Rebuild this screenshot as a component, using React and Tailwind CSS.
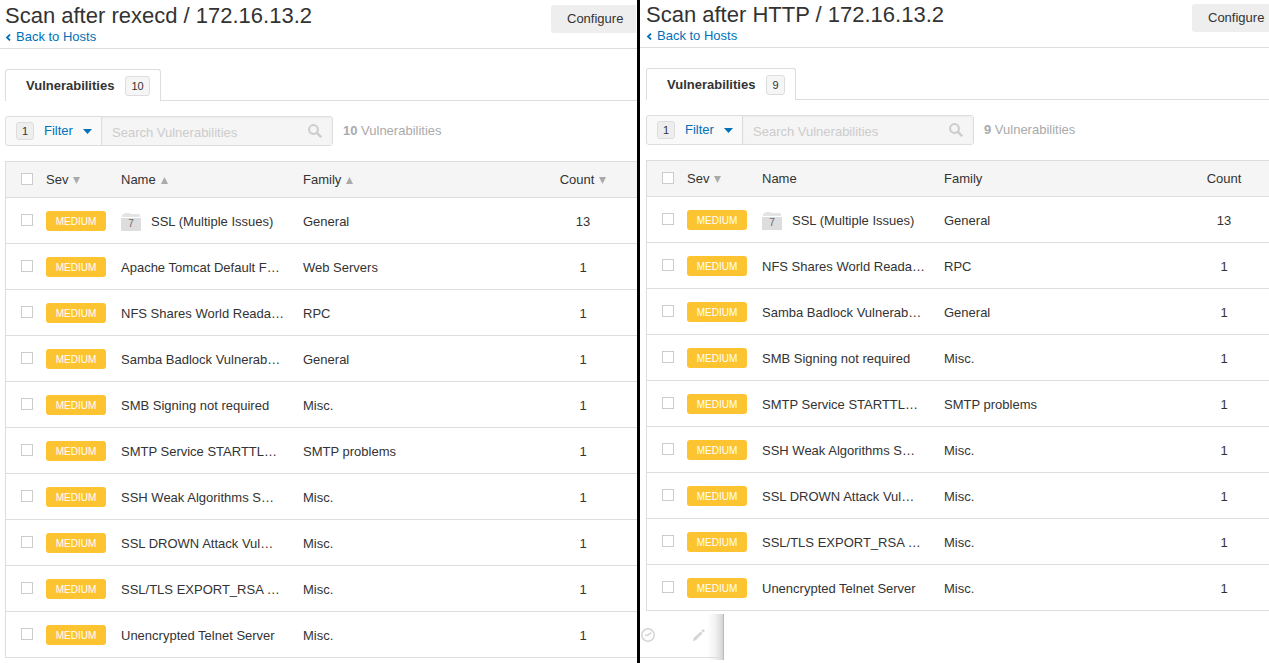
import React from "react";
import clsx from "clsx";

const sharedRows = [
  ["NFS Shares World Reada…", "RPC", 1],
  ["Samba Badlock Vulnerab…", "General", 1],
  ["SMB Signing not required", "Misc.", 1],
  ["SMTP Service STARTTL…", "SMTP problems", 1],
  ["SSH Weak Algorithms S…", "Misc.", 1],
  ["SSL DROWN Attack Vul…", "Misc.", 1],
  ["SSL/TLS EXPORT_RSA …", "Misc.", 1],
  ["Unencrypted Telnet Server", "Misc.", 1],
];
const sslGroup = ["SSL (Multiple Issues)", "General", 13, 7];
const rexecdRows = [sslGroup, ["Apache Tomcat Default F…", "Web Servers", 1], ...sharedRows];
const httpRows = [sslGroup, ...sharedRows];

function Sort({ down }) {
  return (
    <svg className="ml-[5px] inline-block h-[7px] w-[7px] fill-[#aaa]" viewBox="0 0 7 7" aria-hidden="true">
      <path d={down ? "M0 0h7L3.5 7z" : "M0 7h7L3.5 0z"} />
    </svg>
  );
}

function Check({ label }) {
  return (
    <input
      type="checkbox"
      aria-label={label}
      className="block h-3 w-3 appearance-none border border-[#ccc] bg-white checked:bg-[#0071b9]"
    />
  );
}

function Folder({ count }) {
  return (
    <span className="relative mr-2.5 inline-block h-[18px] w-5 shrink-0">
      <svg className="block h-[18px] w-5" viewBox="0 0 20 18" aria-hidden="true">
        <path d="M1 4V2l1-1h1l1-1h4.500l1 1H18l1 1v2z" fill="#e4e4e4" />
        <path d="M0 5h20v12l-.5 1H.5L0 17z" fill="#ddd" />
      </svg>
      <span className="absolute inset-x-0 top-1 text-center text-[10px] leading-[14px] text-[#666]">{count}</span>
    </span>
  );
}

function Panel({ title, rows, sortable, id, className, inset, countWidth, buttonClass, children }) {
  return (
    <section className={clsx("min-w-0", className)}>
      <header className={clsx("flex items-start justify-between border-b border-[#ddd] pb-0.5", inset)}>
        <div>
          <h1 className="text-[22px] leading-6">{title}</h1>
          <a href="#hosts" className="flex items-center text-[13px] leading-[18px] text-[#0071b9]">
            <svg className="mr-1 h-[7px] w-[7px]" viewBox="0 0 7 7" fill="none" stroke="currentColor" strokeWidth="1.800" aria-hidden="true">
              <path d="M5 .6 2 3.500 5 6.400" />
            </svg>
            Back to Hosts
          </a>
        </div>
        <button type="button" className={clsx("mt-px h-7 rounded-l-[3px] bg-[#eee] pl-4 text-left", buttonClass)}>
          Configure
        </button>
      </header>

      <div className={clsx("mt-5", inset, "pt-0!")}>
        <nav className="flex items-end">
          <a href="#vulnerabilities" className="flex h-8 items-center gap-[11px] rounded-t-[3px] border border-b-0 border-[#ddd] pl-5 pr-2.5 font-bold">
            Vulnerabilities
            <span className="rounded-[3px] border border-[#ddd] bg-[#f5f5f5] px-[5px] text-[11px] leading-[18px] font-normal">{rows.length}</span>
          </a>
          <div className="flex-1 border-b border-[#ddd]" />
        </nav>

        <div className="mt-[15px] flex items-center">
          <div className="flex h-[30px] w-[328px] rounded-[3px] border border-[#ddd] bg-[#f9f9f9]">
            <button type="button" className="flex w-24 shrink-0 items-center border-r border-[#ddd] pl-2.5 text-[#0071b9]">
              <span className="mr-2.5 w-[18px] rounded-[3px] border border-[#ddd] bg-[#eee] text-center text-[11px] leading-4 text-[#333]">1</span>
              Filter
              <svg className="ml-2.5 h-[5px] w-[9px] fill-current" viewBox="0 0 9 5" aria-hidden="true">
                <path d="M0 0h9L4.500 5z" />
              </svg>
            </button>
            <div className="flex min-w-0 flex-1 items-center bg-[#f5f5f5] pr-2.5 shadow-[inset_0_1px_2px_#ececec]">
              <label htmlFor={id} className="sr-only">Search Vulnerabilities</label>
              <input id={id} type="text" placeholder="Search Vulnerabilities" className="h-full min-w-0 flex-1 bg-transparent pt-0.5 pl-2.5 outline-none placeholder:text-[#ccc]" />
              <svg className="h-3.5 w-3.5" viewBox="0 0 14 14" fill="none" stroke="#ccc" strokeWidth="2" aria-hidden="true">
                <circle cx="5.500" cy="5.500" r="4.400" />
                <path d="m8.800 8.800 4.400 4.400" strokeWidth="2.400" />
              </svg>
            </div>
          </div>
          <p className="ml-2.5 text-[#aaa]"><b>{rows.length}</b> Vulnerabilities</p>
        </div>

        <table className="mt-[15px] w-full table-fixed border-separate border-spacing-0 border-t border-l border-[#ddd] text-left">
          <thead>
            <tr className="h-9 bg-[#f5f5f5] *:border-b *:border-[#ddd] *:font-normal">
              <th className="w-10 pb-0.5 pl-[15px]"><Check label="Select all" /></th>
              <th className="w-[75px]">Sev<Sort down /></th>
              <th className="w-[182px]">Name{sortable && <Sort />}</th>
              <th>Family{sortable && <Sort />}</th>
              <th className={clsx("text-center", countWidth)}>Count{sortable && <Sort down />}</th>
            </tr>
          </thead>
          <tbody>
            {rows.map(([name, family, count, group]) => (
              <tr key={name} className="h-[46px] *:border-b *:border-[#ddd] *:pt-0.5">
                <td className="pt-0! pb-0.5 pl-[15px]"><Check label={"Select " + name} /></td>
                <td className="pt-0!"><span className="block h-5 w-[60px] rounded-[3px] bg-[#fdc431] pt-px text-center text-[10px] leading-5 text-white">MEDIUM</span></td>
                <td>
                  <div className="flex items-center whitespace-nowrap">
                    {group && <Folder count={group} />}
                    <span>{name}</span>
                  </div>
                </td>
                <td>{family}</td>
                <td className="text-center">{count}</td>
              </tr>
            ))}
          </tbody>
        </table>
      </div>
      {children}
    </section>
  );
}

function RowActions() {
  return (
    <div className="mt-[3px] flex h-[46px] w-[84px] flex-col border-r border-[#bbb] bg-[linear-gradient(to_left,#d4d4d4,#f2f2f2_8px,#fff_16px)]">
      <div className="flex h-11 items-center justify-between border-b border-[#ddd] pr-[18px] pb-0.5">
        <button type="button" aria-label="Snooze" className="pl-px">
          <svg className="block h-3.5 w-3.5" viewBox="0 0 14 14" fill="none" stroke="#d5d5d5" strokeWidth="1.500" aria-hidden="true">
            <circle cx="7" cy="7" r="6.200" />
            <path d="M4 7.200h2.800L10.300 4.600" />
          </svg>
        </button>
        <button type="button" aria-label="Modify">
          <svg className="block h-3 w-3 fill-[#d5d5d5]" viewBox="0 0 12 12" aria-hidden="true">
            <path d="m0 12 .7-2.900L7.700 2.400l1.900 1.900-6.800 7zM8.400 1.700l1.300-1.300q.5-.5 1 0l.9.900q.5.500 0 1L10.300 3.600z" />
          </svg>
        </button>
      </div>
    </div>
  );
}

export default function App() {
  return (
    <main className="grid min-h-screen grid-cols-[640fr_629fr] bg-white font-['Liberation_Sans',Arial,sans-serif] text-[13px] leading-[18px] text-[#333]">
      <Panel
        id="search-rexecd"
        title="Scan after rexecd / 172.16.13.2"
        rows={rexecdRows}
        sortable
        className="border-r-[3px] border-black"
        inset="pl-[5px] pt-1"
        countWidth="w-[108px]"
        buttonClass="mr-px w-[85px]"
      />
      <Panel
        id="search-http"
        title="Scan after HTTP / 172.16.13.2"
        rows={httpRows}
        inset="pl-1.5 pt-[3px]"
        countWidth="w-[90px]"
        buttonClass="w-[77px]"
      >
        <RowActions />
      </Panel>
    </main>
  );
}
